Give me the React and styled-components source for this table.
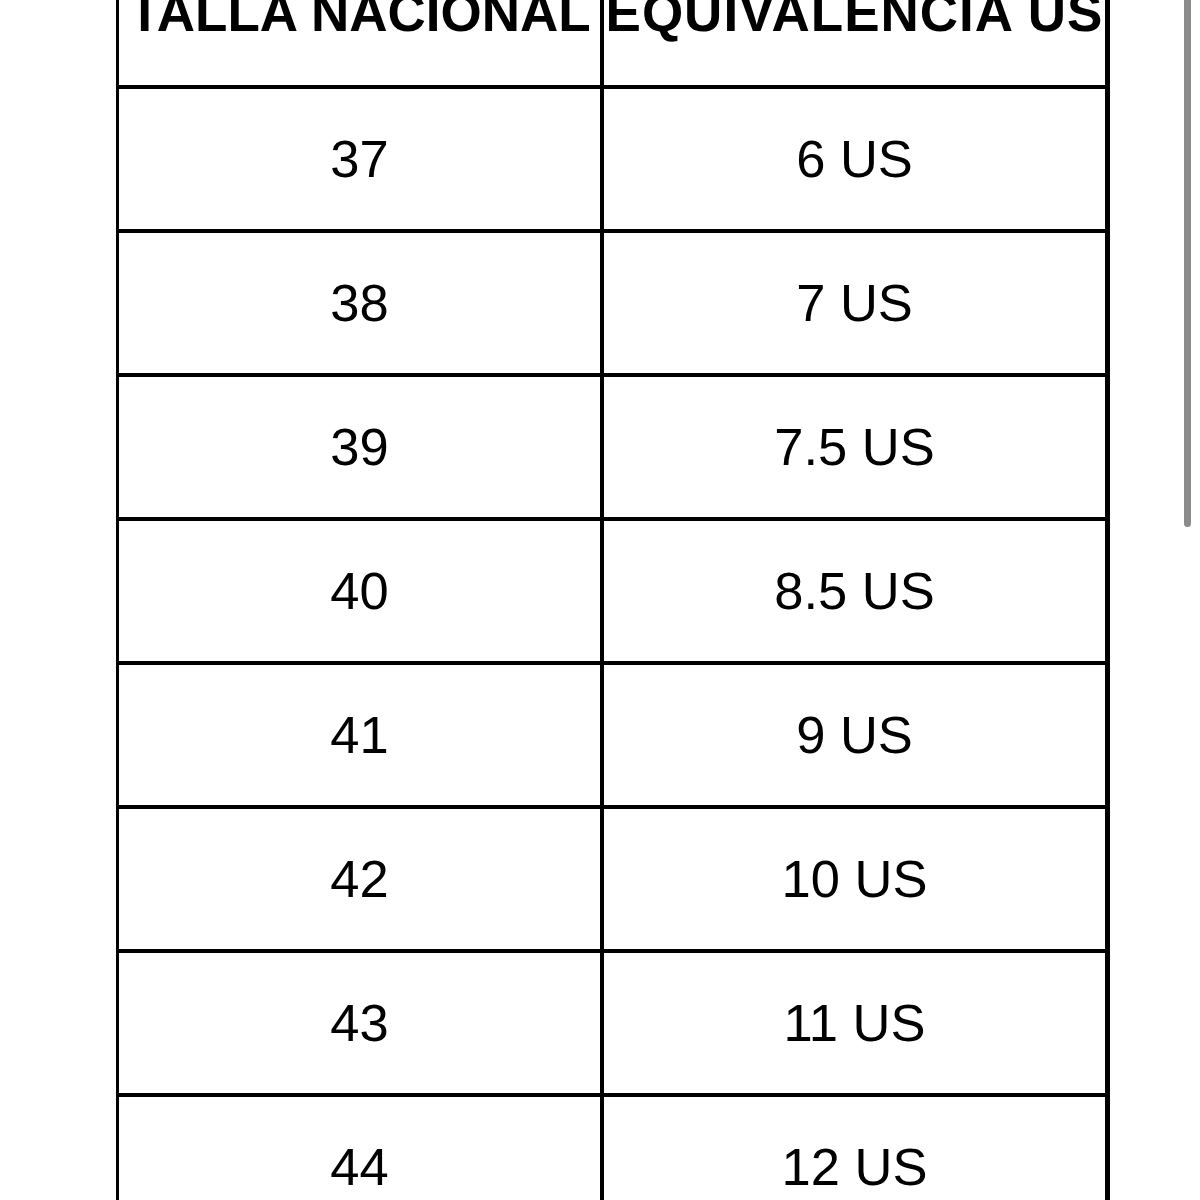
import React from 'react';
import styled, { createGlobalStyle } from 'styled-components';

const GlobalStyle = createGlobalStyle`
    html, body {
        margin: 0;
        padding: 0;
        background: #fff;
        overflow: hidden;
        height: 1200px;
    }
    body {
        font-family: "Liberation Sans", Arial, sans-serif;
    }
`;

const sizes = [
    ['37', '6 US'],
    ['38', '7 US'],
    ['39', '7.5 US'],
    ['40', '8.5 US'],
    ['41', '9 US'],
    ['42', '10 US'],
    ['43', '11 US'],
    ['44', '12 US'],
];

const Page = styled.div`
    padding-left: 116px;
    margin-top: -55px;
`;

const Table = styled.div`
    display: grid;
    grid-template-columns: 481px 501px;
    grid-auto-rows: 140px;
    column-gap: 4px;
    row-gap: 4px;
    width: 988px;
    padding: 0 3px 4px 3px;
    background: #000;
`;

const Cell = styled.div`
    background: #fff;
    display: flex;
    align-items: center;
    justify-content: center;
    white-space: nowrap;
    color: #000;
    font-size: ${(p) => (p.head ? '53px' : '52.5px')};
    line-height: 1;
    font-weight: ${(p) => (p.head ? 700 : 400)};
    letter-spacing: ${(p) => (p.head && p.wide ? '1px' : '0')};
    padding-bottom: ${(p) => (p.head ? '6px' : '0')};
`;

const ScrollIndicator = styled.div`
    position: fixed;
    top: -4px;
    right: 9px;
    width: 7px;
    height: 531px;
    border-radius: 4px;
    background: #8b8b8b;
`;

export default function App() {
    return (
        <>
            <GlobalStyle />
            <Page>
                <Table>
                    <Cell head>TALLA NACIONAL</Cell>
                    <Cell head wide>EQUIVALENCIA US</Cell>
                    {sizes.map(([eu, us]) => (
                        <React.Fragment key={eu}>
                            <Cell>{eu}</Cell>
                            <Cell>{us}</Cell>
                        </React.Fragment>
                    ))}
                </Table>
            </Page>
            <ScrollIndicator />
        </>
    );
}
